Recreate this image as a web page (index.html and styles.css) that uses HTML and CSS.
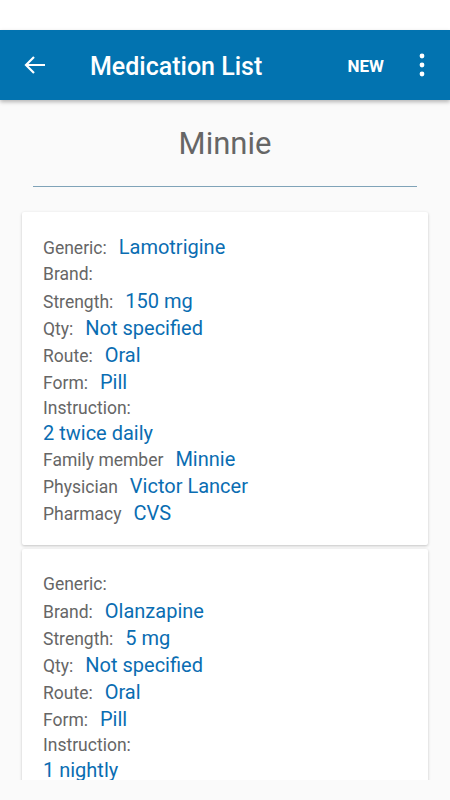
FILE: index.html
```html
<!DOCTYPE html>
<html>
<head>
<meta charset="utf-8">
<link rel="stylesheet" href="styles.css">
</head>
<body>
<div class="status"></div>
<header class="appbar">
  <svg class="back" width="24" height="20" viewBox="0 0 24 20"><path d="M2 10H21M10 2L2 10L10 18" fill="none" stroke="#fff" stroke-width="2.2"/></svg>
  <div class="title">Medication List</div>
  <div class="new">NEW</div>
  <svg class="more" width="8" height="24" viewBox="0 0 8 24"><circle cx="4" cy="3" r="2.4" fill="#fff"/><circle cx="4" cy="12" r="2.4" fill="#fff"/><circle cx="4" cy="21" r="2.4" fill="#fff"/></svg>
</header>
<main class="content">
  <h1 class="name">Minnie</h1>
  <div class="rule"></div>
  <section class="card">
    <div class="row"><span class="lbl">Generic:</span><span class="val">Lamotrigine</span></div>
    <div class="row"><span class="lbl">Brand:</span><span class="val"></span></div>
    <div class="row"><span class="lbl">Strength:</span><span class="val">150 mg</span></div>
    <div class="row"><span class="lbl">Qty:</span><span class="val">Not specified</span></div>
    <div class="row"><span class="lbl">Route:</span><span class="val">Oral</span></div>
    <div class="row"><span class="lbl">Form:</span><span class="val">Pill</span></div>
    <div class="instr-lbl lbl">Instruction:</div>
    <div class="instr-val val">2 twice daily</div>
    <div class="row"><span class="lbl">Family member</span><span class="val">Minnie</span></div>
    <div class="row"><span class="lbl">Physician</span><span class="val">Victor Lancer</span></div>
    <div class="row"><span class="lbl">Pharmacy</span><span class="val">CVS</span></div>
  </section>
  <section class="card">
    <div class="row"><span class="lbl">Generic:</span><span class="val"></span></div>
    <div class="row"><span class="lbl">Brand:</span><span class="val">Olanzapine</span></div>
    <div class="row"><span class="lbl">Strength:</span><span class="val">5 mg</span></div>
    <div class="row"><span class="lbl">Qty:</span><span class="val">Not specified</span></div>
    <div class="row"><span class="lbl">Route:</span><span class="val">Oral</span></div>
    <div class="row"><span class="lbl">Form:</span><span class="val">Pill</span></div>
    <div class="instr-lbl lbl">Instruction:</div>
    <div class="instr-val val">1 nightly</div>
  </section>
</main>
</body>
</html>
```
FILE: styles.css
```css
html, body {
  margin: 0;
  padding: 0;
}
body {
  width: 450px;
  height: 800px;
  background: #fafafa;
  font-family: Roboto, "Noto Sans", sans-serif;
  overflow: hidden;
}
.status {
  height: 30px;
  background: #ffffff;
}
.appbar {
  position: relative;
  z-index: 2;
  height: 70px;
  background: #0273b0;
  box-shadow: 0 2px 4px rgba(0, 0, 0, 0.28);
  display: flex;
  align-items: center;
  color: #fff;
}
.back {
  margin-left: 24px;
  flex: none;
}
.title {
  margin-left: 42px;
  font-size: 25px;
  font-weight: 500;
  flex: 1;
  padding-top: 2px;
}
.new {
  font-size: 17px;
  font-weight: 700;
  margin-right: 34px;
  padding-top: 2px;
}
.more {
  margin-right: 24px;
  flex: none;
}
.content {
  height: 680px;
  overflow: hidden;
  padding-top: 25px;
  box-sizing: border-box;
}
.name {
  margin: 0;
  text-align: center;
  font-size: 31px;
  line-height: 37px;
  font-weight: 400;
  color: #666666;
}
.rule {
  margin: 24px 33px 0;
  height: 1px;
  background: #7fa3b8;
}
.card {
  margin: 25px 22px 0;
  background: #ffffff;
  border-radius: 2px;
  box-shadow: 0 1px 3px rgba(0, 0, 0, 0.22);
  padding: 22px 21px 18px;
}
.card + .card {
  margin-top: 4px;
}
.row {
  display: flex;
  align-items: baseline;
  height: 27px;
  line-height: 27px;
}
.lbl {
  font-size: 17.5px;
  color: #666666;
}
.val {
  font-size: 20px;
  color: #0a6db2;
}
.row .val {
  margin-left: 12px;
}
.instr-lbl, .instr-val {
  height: 25px;
  line-height: 25px;
}
```
